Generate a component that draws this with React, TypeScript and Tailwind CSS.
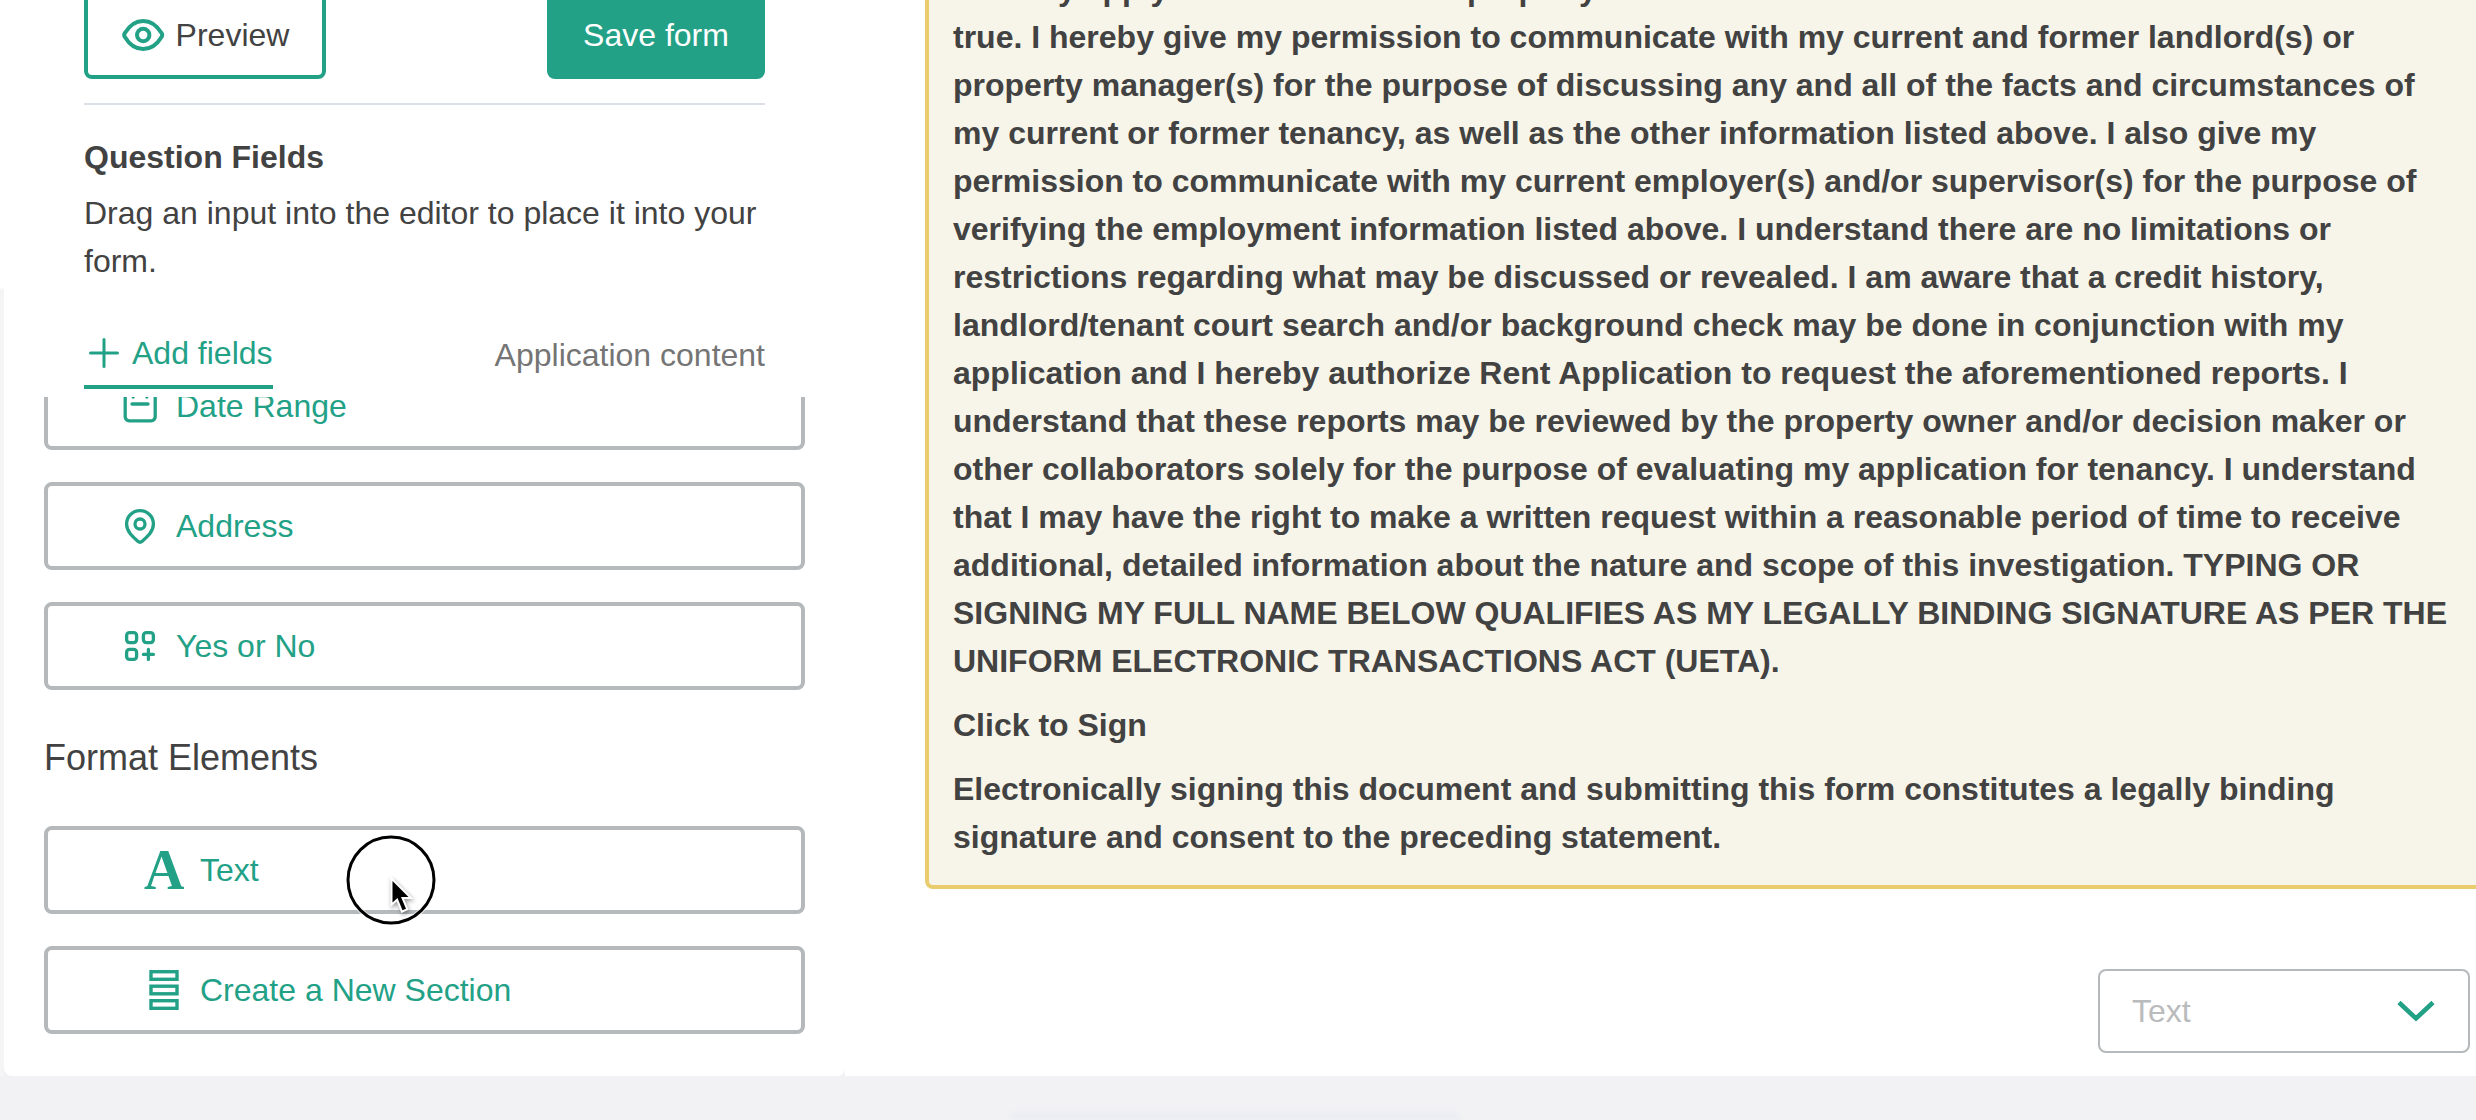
import clsx from "clsx"

const statement = [
  "I hereby apply to lease this rental property and warrant that the statements above set forth are",
  "true. I hereby give my permission to communicate with my current and former landlord(s) or",
  "property manager(s) for the purpose of discussing any and all of the facts and circumstances of",
  "my current or former tenancy, as well as the other information listed above. I also give my",
  "permission to communicate with my current employer(s) and/or supervisor(s) for the purpose of",
  "verifying the employment information listed above. I understand there are no limitations or",
  "restrictions regarding what may be discussed or revealed. I am aware that a credit history,",
  "landlord/tenant court search and/or background check may be done in conjunction with my",
  "application and I hereby authorize Rent Application to request the aforementioned reports. I",
  "understand that these reports may be reviewed by the property owner and/or decision maker or",
  "other collaborators solely for the purpose of evaluating my application for tenancy. I understand",
  "that I may have the right to make a written request within a reasonable period of time to receive",
  "additional, detailed information about the nature and scope of this investigation. TYPING OR",
  "SIGNING MY FULL NAME BELOW QUALIFIES AS MY LEGALLY BINDING SIGNATURE AS PER THE",
  "UNIFORM ELECTRONIC TRANSACTIONS ACT (UETA).",
]

const EyeIcon = () => (
  <svg width="44" height="36" viewBox="0 0 44 36" fill="none" stroke="currentColor" strokeWidth="4">
    <path d="M3.700 16.300C8.500 8.300 14.500 4 22.200 4s13.700 4.300 18.500 12.300a3.300 3.300 0 0 1 0 3.400C35.900 27.700 29.900 32 22.200 32S8.500 27.700 3.700 19.700a3.300 3.300 0 0 1 0-3.400z"/>
    <circle cx="22.200" cy="18" r="6.200"/>
  </svg>
)

const PlusIcon = () => (
  <svg width="32" height="32" viewBox="0 0 32 32" fill="none" stroke="currentColor" strokeWidth="3" strokeLinecap="round">
    <path d="M16 2.500v27M2.500 16h27"/>
  </svg>
)

const CalendarIcon = () => (
  <svg width="40" height="40" viewBox="0 0 40 40" fill="none" stroke="currentColor" strokeWidth="3.300" strokeLinecap="round">
    <rect x="5.200" y="7" width="30" height="27.800" rx="4"/>
    <path d="M12 18h16M13.200 3v8M26.800 3v8"/>
  </svg>
)

const PinIcon = () => (
  <svg width="40" height="40" viewBox="0 0 40 40" fill="none" stroke="currentColor" strokeWidth="3.300" strokeLinejoin="round">
    <path d="M6.600 18a13.400 13.400 0 0 1 26.800 0c0 7.500-6 12.500-11.200 17.200a3.300 3.300 0 0 1-4.400 0C12.600 30.500 6.600 25.500 6.600 18z"/>
    <circle cx="20" cy="18" r="5"/>
  </svg>
)

const OptionsIcon = () => (
  <svg width="40" height="40" viewBox="0 0 40 40" fill="none" stroke="currentColor" strokeWidth="3.300" strokeLinecap="round">
    <rect x="6.600" y="6.600" width="10" height="10" rx="3"/>
    <rect x="23.400" y="6.600" width="10" height="10" rx="3"/>
    <rect x="6.600" y="23.400" width="10" height="10" rx="3"/>
    <path d="M28.400 23.400v10M23.400 28.400h10"/>
  </svg>
)

const SectionsIcon = () => (
  <svg width="40" height="40" viewBox="0 0 40 40" fill="none" stroke="currentColor" strokeWidth="3.400">
    <rect x="7" y="1.700" width="26" height="7.600"/>
    <rect x="7" y="16.200" width="26" height="7.600"/>
    <rect x="7" y="30.700" width="26" height="7.600"/>
  </svg>
)

const LetterIcon = () => (
  <span className="w-10 text-center font-['Liberation_Serif',serif] text-[56px] leading-[40px] font-bold">A</span>
)

interface FieldProps {
  label: string
  icon: React.ReactNode
  wide?: boolean
}

const Field = ({ label, icon, wide }: FieldProps) => (
  <li className={clsx(
    "flex h-[88px] shrink-0 items-center gap-4 rounded-lg border-4 border-[#b5b9bb] text-[#22a186]",
    wide ? "pl-24" : "pl-[72px]"
  )}>
    {icon}
    <span>{label}</span>
  </li>
)

const Pointer = () => (
  <svg className="absolute top-[834px] left-[345px]" width="92" height="92" viewBox="0 0 92 92">
    <circle cx="46" cy="46" r="43" fill="none" stroke="#fff" strokeWidth="5" opacity=".7"/>
    <circle cx="46" cy="46" r="43" fill="none" stroke="#000" strokeWidth="3"/>
    <path
      className="drop-shadow-[1px_2px_2px_rgba(0,0,0,0.4)]"
      d="M47.500 47v21.500l5-4.500 5 12.300 3.500-1.500-5-11.800h7.500z"
      fill="#000" stroke="#fff" strokeWidth="4" paintOrder="stroke"/>
  </svg>
)

const App = () => {
  return (
    <div className="relative flex h-[1120px] w-[2476px] flex-col overflow-hidden bg-[#f2f2f4] font-['Liberation_Sans',Arial,sans-serif] text-[32px] leading-[48px] text-[#424242]">
      <main className="flex h-[1076px] shrink-0">
        <div className="h-full w-1 shrink-0 bg-linear-to-b from-white from-[288px] to-[#f5f5f5] to-[289px]"/>

        <aside className="flex w-[841px] shrink-0 flex-col rounded-b-lg bg-white">
          <div className="mx-20 flex h-[105px] items-start justify-between border-b-2 border-[#dce1e9]">
            <button className="-mt-[9px] flex h-[88px] w-[242px] items-center justify-center gap-[11px] rounded-lg border-4 border-[#22a186]">
              <span className="text-[#22a186]"><EyeIcon/></span>
              Preview
            </button>
            <button className="-mt-[9px] h-[88px] w-[218px] rounded-lg bg-[#22a186] text-white">Save form</button>
          </div>

          <div className="mx-20 mt-7">
            <h2 className="font-bold">Question Fields</h2>
            <p className="mt-2">Drag an input into the editor to place it into your form.</p>
          </div>

          <div className="mx-20 mt-12 flex h-16 items-start justify-between">
            <span className="-mt-3 flex h-[68px] items-center gap-3 border-b-4 border-[#22a186] pl-1 text-[#22a186]">
              <PlusIcon/>
              Add fields
            </span>
            <span className="-mt-0.5 text-[#757575]">Application content</span>
          </div>

          <div className="flex h-[679px] flex-col justify-end overflow-hidden px-10 pb-[42px]">
            <ul className="flex flex-col gap-8">
              <Field label="Date Range" icon={<CalendarIcon/>}/>
              <Field label="Address" icon={<PinIcon/>}/>
              <Field label="Yes or No" icon={<OptionsIcon/>}/>
            </ul>
            <h3 className="my-11 text-[36px]">Format Elements</h3>
            <ul className="flex flex-col gap-8">
              <Field wide label="Text" icon={<LetterIcon/>}/>
              <Field wide label="Create a New Section" icon={<SectionsIcon/>}/>
            </ul>
          </div>
        </aside>

        <section className="flex w-[1631px] shrink-0 flex-col bg-white pl-20">
          <div className="-mt-[35px] h-[924px] w-[1600px] shrink-0 rounded-bl-lg border-b-4 border-l-4 border-[#e8cc6d] bg-[#f7f5e9] pl-6 font-bold">
            <p className="whitespace-nowrap">
              {statement.map((line, index) => <span className="block" key={index}>{line}</span>)}
            </p>
            <p className="mt-4">Click to Sign</p>
            <p className="mt-4 whitespace-nowrap">
              Electronically signing this document and submitting this form constitutes a legally binding<br/>
              signature and consent to the preceding statement.
            </p>
          </div>

          <button className="mt-20 mr-1.5 flex h-[84px] w-[372px] items-center justify-between self-end rounded-lg border-2 border-[#b5b9bb] pr-[31px] pl-8 text-[#b9bbbc]">
            Text
            <svg className="text-[#22a186]" width="42" height="26" viewBox="0 0 42 26" fill="none" stroke="currentColor" strokeWidth="4.500">
              <path d="M4 4.500l17 16 17-16"/>
            </svg>
          </button>
        </section>
      </main>

      <footer className="flex h-11 items-end pl-[1010px]">
        <div className="h-2 w-[450px] rounded-t-full bg-[#ebedf3] blur-[2px]"/>
      </footer>

      <Pointer/>
    </div>
  )
}

export default App
